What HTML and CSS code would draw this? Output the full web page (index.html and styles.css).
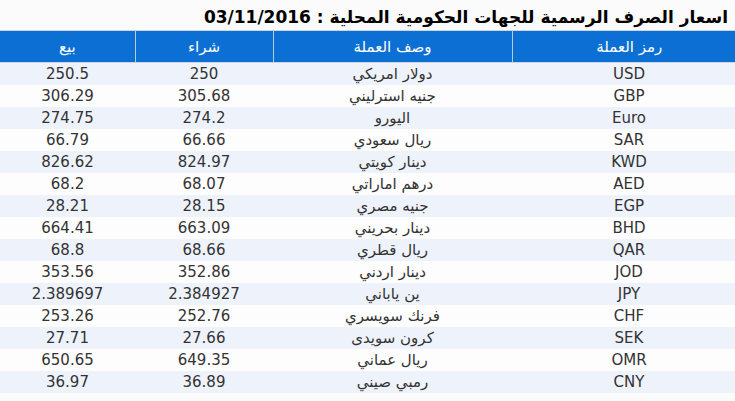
FILE: index.html
```html
<!DOCTYPE html>
<html lang="ar" dir="rtl">
<head>
<meta charset="utf-8">
<link rel="stylesheet" href="styles.css">
</head>
<body>
<div class="page">
  <h1 class="title">اسعار الصرف الرسمية للجهات الحكومية المحلية : 03/11/2016</h1>
  <div class="table-wrap">
    <table class="rates">
      <colgroup>
        <col class="c-code"><col class="c-name"><col class="c-buy"><col class="c-sell">
      </colgroup>
      <thead>
        <tr><th>رمز العملة</th><th>وصف العملة</th><th>شراء</th><th>بيع</th></tr>
      </thead>
      <tbody>
        <tr><td>USD</td><td>دولار امريكي</td><td>250</td><td>250.5</td></tr>
        <tr><td>GBP</td><td>جنيه استرليني</td><td>305.68</td><td>306.29</td></tr>
        <tr><td>Euro</td><td>اليورو</td><td>274.2</td><td>274.75</td></tr>
        <tr><td>SAR</td><td>ريال سعودي</td><td>66.66</td><td>66.79</td></tr>
        <tr><td>KWD</td><td>دينار كويتي</td><td>824.97</td><td>826.62</td></tr>
        <tr><td>AED</td><td>درهم اماراتي</td><td>68.07</td><td>68.2</td></tr>
        <tr><td>EGP</td><td>جنيه مصري</td><td>28.15</td><td>28.21</td></tr>
        <tr><td>BHD</td><td>دينار بحريني</td><td>663.09</td><td>664.41</td></tr>
        <tr><td>QAR</td><td>ريال قطري</td><td>68.66</td><td>68.8</td></tr>
        <tr><td>JOD</td><td>دينار اردني</td><td>352.86</td><td>353.56</td></tr>
        <tr><td>JPY</td><td>ين ياباني</td><td>2.384927</td><td>2.389697</td></tr>
        <tr><td>CHF</td><td>فرنك سويسري</td><td>252.76</td><td>253.26</td></tr>
        <tr><td>SEK</td><td>كرون سويدى</td><td>27.66</td><td>27.71</td></tr>
        <tr><td>OMR</td><td>ريال عماني</td><td>649.35</td><td>650.65</td></tr>
        <tr><td>CNY</td><td>رمبي صيني</td><td>36.89</td><td>36.97</td></tr>
      </tbody>
    </table>
  </div>
</div>
</body>
</html>
```
FILE: styles.css
```css
html, body {
  margin: 0;
  padding: 0;
  background: #fbfbfb;
}
body {
  font-family: "DejaVu Sans", Verdana, sans-serif;
  color: #333;
  width: 735px;
  height: 401px;
  overflow: hidden;
}
.page {
  width: 735px;
}
.title {
  margin: 0;
  height: 30px;
  box-sizing: border-box;
  padding: 7px 7px 0 0;
  font-size: 17px;
  line-height: 20px;
  font-weight: bold;
  color: #000;
  text-align: right;
  white-space: nowrap;
}
.table-wrap {
  width: 735px;
  overflow: hidden;
  direction: rtl;
}
.rates {
  width: 746px;
  border-collapse: collapse;
  table-layout: fixed;
  margin-right: -11px;
}
.c-code { width: 234px; }
.c-name { width: 239px; }
.c-buy { width: 138px; }
.c-sell { width: 135px; }
.rates th {
  background: #0b6fd3;
  color: #fff;
  font-weight: normal;
  font-size: 15px;
  height: 31px;
  padding: 0;
  border-top: 1px solid #cdd5de;
  border-bottom: 1px solid #cdd5de;
  border-left: 1px solid #b9c9dc;
  text-align: center;
  vertical-align: middle;
}
.rates th:last-child {
  border-left: none;
}
.rates td {
  height: 22px;
  padding: 0;
  font-size: 15px;
  line-height: 22px;
  text-align: center;
  color: #333;
}
.rates tbody tr:nth-child(odd) {
  background: #eef2fb;
}
.rates tbody tr:nth-child(even) {
  background: #fdfdfd;
}
```
